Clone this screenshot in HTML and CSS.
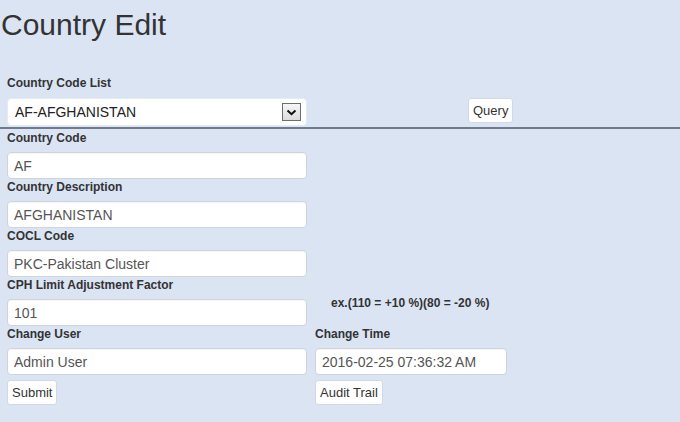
FILE: index.html
```html
<!DOCTYPE html>
<html>
<head>
<meta charset="utf-8">
<link rel="stylesheet" href="styles.css">
</head>
<body>
<h1 class="title">Country Edit</h1>
<div class="top">
  <label class="lbl">Country Code List</label>
  <div class="top-row">
    <div class="select-wrap">
      <select class="select"><option>AF-AFGHANISTAN</option></select>
      <span class="arrow"><svg width="11" height="7" viewBox="0 0 11 7"><path d="M1.5 1.5 L5.5 5.2 L9.5 1.5" fill="none" stroke="#111" stroke-width="2"/></svg></span>
    </div>
    <button class="btn query">Query</button>
  </div>
</div>
<div class="form">
  <div class="field">
    <label class="lbl">Country Code</label>
    <input class="inp" value="AF">
  </div>
  <div></div>
  <div class="field">
    <label class="lbl">Country Description</label>
    <input class="inp" value="AFGHANISTAN">
  </div>
  <div></div>
  <div class="field">
    <label class="lbl">COCL Code</label>
    <input class="inp" value="PKC-Pakistan Cluster">
  </div>
  <div></div>
  <div class="field">
    <label class="lbl">CPH Limit Adjustment Factor</label>
    <input class="inp" value="101">
  </div>
  <div class="hint">ex.(110 = +10 %)(80 = -20 %)</div>
  <div class="field">
    <label class="lbl">Change User</label>
    <input class="inp" value="Admin User">
    <button class="btn act">Submit</button>
  </div>
  <div class="field">
    <label class="lbl">Change Time</label>
    <input class="inp short" value="2016-02-25 07:36:32 AM">
    <button class="btn act">Audit Trail</button>
  </div>
</div>
</body>
</html>
```
FILE: styles.css
```css
html, body {
  margin: 0;
  padding: 0;
  background: #dae4f3;
  font-family: "Liberation Sans", Arial, sans-serif;
  color: #333;
}
.title {
  margin: 8px 0 0 1px;
  font-size: 30px;
  line-height: 34px;
  font-weight: normal;
  color: #333;
}
.top {
  margin-top: 33px;
  padding: 0 0 0 7px;
  height: 52px;
  border-bottom: 2px solid #6f7b8c;
}
.lbl {
  display: block;
  font-size: 12px;
  line-height: 16px;
  font-weight: bold;
  color: #333;
}
.top-row {
  display: flex;
  align-items: flex-start;
  margin-top: 7px;
}
.select-wrap {
  position: relative;
  width: 300px;
  height: 28px;
}
.select {
  appearance: none;
  -webkit-appearance: none;
  width: 300px;
  height: 28px;
  margin: 0;
  border: 1px solid #e6ebf2;
  border-radius: 4px;
  background: #fff;
  font-family: "Liberation Sans", Arial, sans-serif;
  font-size: 14px;
  color: #222;
  padding: 0 0 0 7px;
  box-sizing: border-box;
}
.arrow {
  position: absolute;
  left: 275px;
  top: 5px;
  width: 17px;
  height: 16px;
  border: 1px solid #6d6d6d;
  background: linear-gradient(#f6f6f6, #dcdcdc);
  display: flex;
  align-items: center;
  justify-content: center;
}
.btn {
  font-family: "Liberation Sans", Arial, sans-serif;
  font-size: 13px;
  color: #333;
  background: #fff;
  border: 1px solid #d3d9e2;
  border-radius: 3px;
  padding: 0 4px;
  height: 25px;
  margin: 0;
}
.query {
  margin-left: 161px;
}
.form {
  display: grid;
  grid-template-columns: 308px 1fr;
  padding: 1px 0 0 7px;
}
.field {
  display: flex;
  flex-direction: column;
  align-items: flex-start;
}
.inp {
  box-sizing: border-box;
  width: 300px;
  height: 27px;
  margin: 6px 0 0 0;
  border: 1px solid #cfd4da;
  border-radius: 4px;
  background: #fff;
  font-family: "Liberation Sans", Arial, sans-serif;
  font-size: 14px;
  color: #555;
  padding: 0 6px;
  box-shadow: inset 0 1px 1px rgba(0,0,0,0.04);
}
.inp.short {
  width: 192px;
}
.act {
  margin-top: 5px;
}
.hint {
  padding: 18px 0 0 16px;
  font-size: 12px;
  line-height: 16px;
  font-weight: bold;
  color: #333;
}
```
